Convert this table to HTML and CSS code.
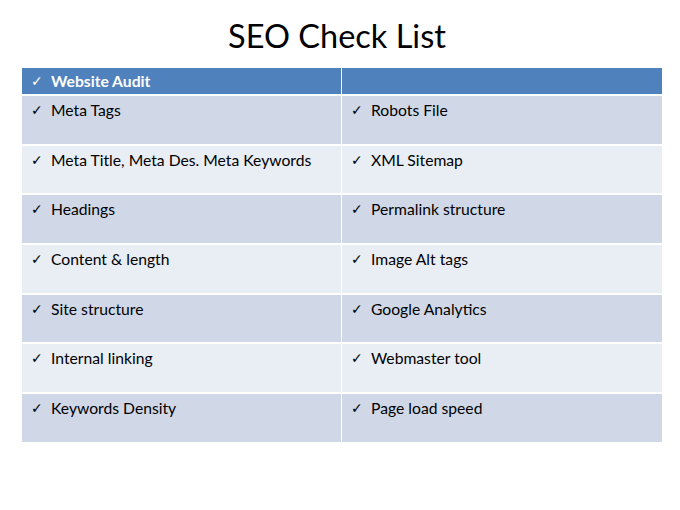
FILE: index.html
```html
<!DOCTYPE html>
<html>
<head>
<meta charset="utf-8">
<link rel="stylesheet" href="styles.css">
</head>
<body>
<div class="slide">
  <h1 class="title">SEO Check List</h1>
  <div class="table">
    <div class="cell head"><span class="ck">✓</span><span>Website Audit</span></div>
    <div class="cell head"></div>
    <div class="cell odd"><span class="ck">✓</span><span>Meta Tags</span></div>
    <div class="cell odd"><span class="ck">✓</span><span>Robots File</span></div>
    <div class="cell even"><span class="ck">✓</span><span>Meta Title, Meta Des. Meta Keywords</span></div>
    <div class="cell even"><span class="ck">✓</span><span>XML Sitemap</span></div>
    <div class="cell odd"><span class="ck">✓</span><span>Headings</span></div>
    <div class="cell odd"><span class="ck">✓</span><span>Permalink structure</span></div>
    <div class="cell even"><span class="ck">✓</span><span>Content &amp; length</span></div>
    <div class="cell even"><span class="ck">✓</span><span>Image Alt tags</span></div>
    <div class="cell odd"><span class="ck">✓</span><span>Site structure</span></div>
    <div class="cell odd"><span class="ck">✓</span><span>Google Analytics</span></div>
    <div class="cell even"><span class="ck">✓</span><span>Internal linking</span></div>
    <div class="cell even"><span class="ck">✓</span><span>Webmaster tool</span></div>
    <div class="cell odd"><span class="ck">✓</span><span>Keywords Density</span></div>
    <div class="cell odd"><span class="ck">✓</span><span>Page load speed</span></div>
  </div>
</div>
</body>
</html>
```
FILE: styles.css
```css
html, body {
  margin: 0;
  padding: 0;
  background: #ffffff;
}
.slide {
  width: 680px;
  height: 510px;
  padding-top: 15px;
  box-sizing: border-box;
  font-family: "Lato", "Open Sans", sans-serif;
  color: #000;
}
.title {
  margin: 0;
  text-align: center;
  font-weight: 400;
  font-size: 32.5px;
  line-height: 42px;
  height: 53px;
  padding-right: 6px;
}
.table {
  margin-left: 22px;
  width: 640px;
  display: grid;
  grid-template-columns: 319px 320px;
  grid-template-rows: 26px repeat(7, 47.7px);
  column-gap: 1px;
  row-gap: 2px;
}
.cell {
  display: flex;
  align-items: flex-start;
  padding: 4px 0 0 9px;
  font-size: 15.7px;
  line-height: 20px;
}
.head {
  background: #4f81bd;
  color: #fff;
  font-weight: 700;
  padding-top: 3px;
}
.odd { background: #d0d8e8; }
.even { background: #e9edf4; }
.ck {
  font-family: "DejaVu Sans", sans-serif;
  font-size: 14px;
  width: 20px;
  font-weight: 400;
}
```
